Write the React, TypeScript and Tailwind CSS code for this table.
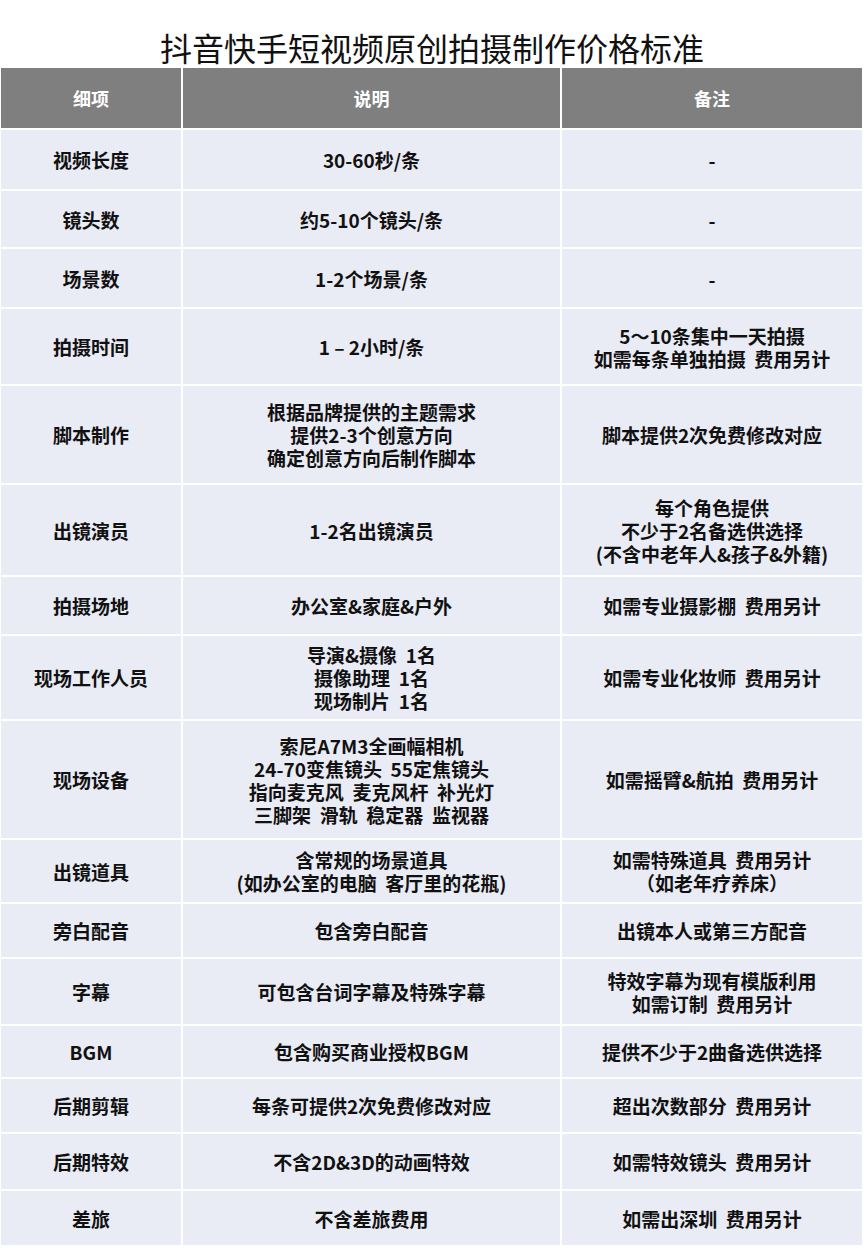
import { Fragment } from 'react';

const rows: [string, string, string][] = [
  ['视频长度', '30-60秒/条', '-'],
  ['镜头数', '约5-10个镜头/条', '-'],
  ['场景数', '1-2个场景/条', '-'],
  ['拍摄时间', '1 – 2小时/条', '5～10条集中一天拍摄\n如需每条单独拍摄  费用另计'],
  ['脚本制作', '根据品牌提供的主题需求\n提供2-3个创意方向\n确定创意方向后制作脚本', '脚本提供2次免费修改对应'],
  ['出镜演员', '1-2名出镜演员', '每个角色提供\n不少于2名备选供选择\n(不含中老年人&孩子&外籍)'],
  ['拍摄场地', '办公室&家庭&户外', '如需专业摄影棚  费用另计'],
  ['现场工作人员', '导演&摄像  1名\n摄像助理  1名\n现场制片  1名', '如需专业化妆师  费用另计'],
  ['现场设备', '索尼A7M3全画幅相机\n24-70变焦镜头  55定焦镜头\n指向麦克风  麦克风杆  补光灯\n三脚架  滑轨  稳定器  监视器', '如需摇臂&航拍  费用另计'],
  ['出镜道具', '含常规的场景道具\n(如办公室的电脑  客厅里的花瓶)', '如需特殊道具  费用另计\n（如老年疗养床）'],
  ['旁白配音', '包含旁白配音', '出镜本人或第三方配音'],
  ['字幕', '可包含台词字幕及特殊字幕', '特效字幕为现有模版利用\n如需订制  费用另计'],
  ['BGM', '包含购买商业授权BGM', '提供不少于2曲备选供选择'],
  ['后期剪辑', '每条可提供2次免费修改对应', '超出次数部分  费用另计'],
  ['后期特效', '不含2D&3D的动画特效', '如需特效镜头  费用另计'],
  ['差旅', '不含差旅费用', '如需出深圳  费用另计'],
];

function Cell({ text, head }: { text: string; head?: boolean }) {
  return (
    <div
      className={
        head
          ? 'flex items-center justify-center bg-[#7f7f7f] text-white text-[18px] font-bold leading-[23px]'
          : 'flex items-center justify-center bg-[#e9ebf5] text-[#111] text-[19px] font-bold leading-[23px] text-center whitespace-pre'
      }
    >
      {text}
    </div>
  );
}

export default function App() {
  return (
    <div
      className="w-[864px] h-[1248px] bg-white overflow-hidden"
      style={{ fontFamily: '"Noto Sans CJK SC", "Noto Sans", sans-serif' }}
    >
      <div className="h-[68px] flex items-end justify-center">
        <h1 className="text-[32px] leading-[40px] font-normal text-[#111] pb-[1px]">抖音快手短视频原创拍摄制作价格标准</h1>
      </div>
      <div className="ml-[1px] w-[861px] grid grid-cols-[180px_377px_300px] gap-[2px] grid-rows-[60px_59px_56px_58px_75px_97px_90px_57px_83px_117px_62px_53px_65px_51px_53px_55px_54px]">
        <Cell head text="细项" />
        <Cell head text="说明" />
        <Cell head text="备注" />
        {rows.map((r, i) => (
          <Fragment key={i}>
            <Cell text={r[0]} />
            <Cell text={r[1]} />
            <Cell text={r[2]} />
          </Fragment>
        ))}
      </div>
    </div>
  );
}
